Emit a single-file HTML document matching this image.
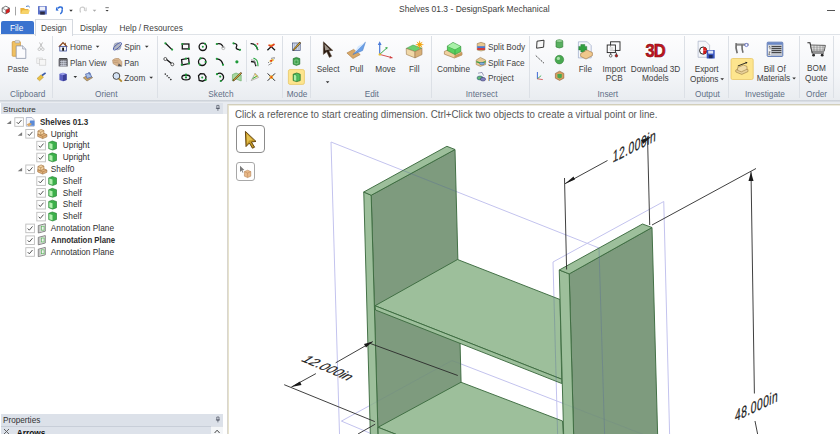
<!DOCTYPE html>
<html><head><meta charset="utf-8">
<style>
*{box-sizing:border-box}
html,body{margin:0;padding:0}
body{width:840px;height:434px;overflow:hidden;position:relative;background:#fff;font-family:"Liberation Sans",sans-serif;color:#3c3c3c}
.a{position:absolute}
.t{position:absolute;white-space:nowrap;font-size:8.25px;line-height:1;color:#424242}
.g{position:absolute;white-space:nowrap;font-size:8.25px;line-height:1;color:#5f6e86}
.sep{position:absolute;width:1px;background:#dce0e6;top:36px;height:62px}
#ribbon{position:absolute;left:0;top:34px;width:840px;height:67px;background:linear-gradient(#fdfdfe 0%,#f3f5f8 60%,#e9ecf0 100%);border-top:1px solid #dfe3e8}
.tr{position:absolute;white-space:nowrap;font-size:8.3px;line-height:1;color:#2e2e2e}
svg{position:absolute;overflow:visible}
</style></head><body>

<!-- title bar -->
<div class="a" style="left:0;top:0;width:840px;height:20px;background:#fff"></div>
<div class="t" style="left:399px;top:3.9px;font-size:9.6px;color:#404040;transform:scaleX(0.885);transform-origin:0 0">Shelves 01.3 - DesignSpark Mechanical</div>
<div class="a" style="left:827px;top:10px;width:8px;height:1px;background:#555"></div>

<!-- tabs -->
<div class="a" style="left:1px;top:21px;width:33px;height:14px;background:#3a73cf;border-radius:2px 2px 0 0"></div>
<div class="t" style="left:10px;top:24.5px;color:#fff">File</div>
<div class="a" style="left:35px;top:19px;width:38px;height:17px;background:#fdfdfe;border:1px solid #d5d9df;border-bottom:none;z-index:2"></div>
<div class="t" style="left:41px;top:24.5px;z-index:3">Design</div>
<div class="t" style="left:80px;top:24.5px">Display</div>
<div class="t" style="left:119.5px;top:24.5px">Help / Resources</div>

<!-- ribbon -->
<div id="ribbon"></div>
<div class="a" style="left:0;top:100px;width:840px;height:5px;background:#e9ecf1"></div><div class="a" style="left:0;top:100px;width:840px;height:2px;background:linear-gradient(#c9ced6,#dfe3e9)"></div>

<!-- group labels -->
<div class="g" style="left:10px;top:90.9px">Clipboard</div>
<div class="g" style="left:95px;top:90.9px">Orient</div>
<div class="g" style="left:208.3px;top:90.9px">Sketch</div>
<div class="g" style="left:286.7px;top:90.9px">Mode</div>
<div class="g" style="left:364.7px;top:90.9px">Edit</div>
<div class="g" style="left:465.8px;top:90.9px">Intersect</div>
<div class="g" style="left:597.5px;top:90.9px">Insert</div>
<div class="g" style="left:695px;top:90.9px">Output</div>
<div class="g" style="left:745px;top:90.9px">Investigate</div>
<div class="g" style="left:806px;top:90.9px">Order</div>

<div class="sep" style="left:52px"></div>
<div class="sep" style="left:157px"></div>
<div class="sep" style="left:246px;top:40px;height:42px"></div>
<div class="sep" style="left:282px"></div>
<div class="sep" style="left:310px"></div>
<div class="sep" style="left:431px"></div>
<div class="sep" style="left:529px"></div>
<div class="sep" style="left:684px"></div>
<div class="sep" style="left:728px"></div>
<div class="sep" style="left:799px"></div>
<div class="sep" style="left:833px"></div>

<!-- ribbon texts -->
<div class="t" style="left:7.5px;top:65.6px">Paste</div>
<div class="t" style="left:70px;top:44.2px">Home</div>
<div class="t" style="left:70px;top:59.6px">Plan View</div>
<div class="t" style="left:124.2px;top:44.2px">Spin</div>
<div class="t" style="left:124.2px;top:59.6px">Pan</div>
<div class="t" style="left:124.2px;top:75.1px">Zoom</div>
<div class="t" style="left:316.7px;top:65.6px">Select</div>
<div class="t" style="left:349.7px;top:65.6px">Pull</div>
<div class="t" style="left:375.3px;top:65.6px">Move</div>
<div class="t" style="left:409px;top:65.6px">Fill</div>
<div class="t" style="left:437px;top:65.6px">Combine</div>
<div class="t" style="left:488px;top:44.2px">Split Body</div>
<div class="t" style="left:488px;top:59.6px">Split Face</div>
<div class="t" style="left:488px;top:75.1px">Project</div>
<div class="t" style="left:578.7px;top:65.9px">File</div>
<div class="t" style="left:602.5px;top:65.9px">Import</div>
<div class="t" style="left:605.8px;top:74.9px">PCB</div>
<div class="t" style="left:630.8px;top:65.9px">Download 3D</div>
<div class="t" style="left:642px;top:74.9px">Models</div>
<div class="t" style="left:694.7px;top:66.3px">Export</div>
<div class="t" style="left:690px;top:76.2px">Options</div>
<div class="t" style="left:763.7px;top:66.3px">Bill Of</div>
<div class="t" style="left:756.7px;top:75.3px">Materials</div>
<div class="t" style="left:807px;top:65.3px">BOM</div>
<div class="t" style="left:805px;top:74.6px">Quote</div>

<!-- left panel -->
<div class="a" style="left:0;top:103px;width:227px;height:331px;background:#fff"></div>
<div class="a" style="left:223px;top:102px;width:4px;height:12px;background:#e9ecf1"></div>
<div class="a" style="left:1px;top:102.5px;width:222px;height:11.5px;background:#dce1e9"></div>
<div class="tr" style="left:3px;top:105.5px;color:#333;font-size:8.1px">Structure</div>
<div class="a" style="left:227px;top:104px;width:1px;height:330px;background:#d9d6cf"></div>
<div class="a" style="left:228px;top:104px;width:1px;height:330px;background:#e6e2cc"></div>

<!-- properties -->
<div class="a" style="left:1px;top:414px;width:222px;height:12px;background:#dce1e9"></div>
<div class="a" style="left:1px;top:426px;width:222px;height:1px;background:#c8ced8"></div>
<div class="a" style="left:1px;top:427px;width:222px;height:7px;background:#dde2ea"></div>
<div class="tr" style="left:3px;top:416.8px;color:#333;font-size:8.2px">Properties</div>

<!-- viewport -->
<div class="a" style="left:228px;top:104px;width:612px;height:1px;background:#d2cebb"></div><div class="a" style="left:229px;top:105px;width:611px;height:1px;background:#eeecdf"></div>
<div class="a" style="left:235px;top:110px;font-size:10.3px;line-height:1;white-space:nowrap;color:#585858;transform:scaleX(0.947);transform-origin:0 0">Click a reference to start creating dimension. Ctrl+Click two objects to create a virtual point or line.</div>


<svg class="a" style="left:0;top:0" width="840" height="102" viewBox="0 0 840 102">
<!-- QAT -->
<g>
<path d="M5.8,6.2 L9.4,8 L9.4,12 L5.8,13.8 L2.2,12 L2.2,8 Z" fill="#fff" stroke="#6a6a6a" stroke-width="0.9"/>
<path d="M5.8,10 L9.4,8 L9.4,12 L5.8,13.8 Z" fill="#d81b1b"/>
<path d="M2.2,8 L5.8,10 L9.4,8 M5.8,10 L5.8,13.8" stroke="#6a6a6a" stroke-width="0.7" fill="none"/>
<rect x="15" y="6.8" width="0.9" height="8.6" fill="#9a9a9a"/>
<path d="M20.4,8 L24,8 L25,9 L28.5,9 L28.5,13.8 L20.4,13.8 Z" fill="#e9b23c"/>
<path d="M20.8,13.8 L22.5,10.3 L30,10.3 L28.3,13.8 Z" fill="#f7d46a"/>
<path d="M26,6.5 Q28.5,5 29.8,7.2" stroke="#3a6fc0" stroke-width="0.9" fill="none"/>
<rect x="38" y="6" width="8.8" height="8.6" fill="#5a70c8" rx="0.6"/>
<rect x="39.6" y="6.6" width="5.6" height="3.8" fill="#eef0f8"/>
<rect x="40.2" y="11.6" width="4.6" height="3" fill="#2c2c44"/>
<path d="M62.2,9.5 Q62.8,6.5 59.8,7 L57.5,8.2" stroke="#2e6dd8" stroke-width="1.6" fill="none"/>
<path d="M56.2,6.8 L58.6,10.8 L55.8,10.6 Z" fill="#2e6dd8"/>
<path d="M62.2,9.5 Q62.5,12.5 60.2,13.8" stroke="#2e6dd8" stroke-width="1.4" fill="none"/>
<path d="M69.2,9.7 L72.8,9.7 L71.0,11.7 Z" fill="#333"/>
<path d="M80.5,12.5 Q79,7 82.5,7 Q85,7.2 84.6,9.8" stroke="#c8c8c8" stroke-width="1.2" fill="none"/>
<path d="M86.2,7.5 L86.2,11 L83.8,10.2" stroke="#c8c8c8" stroke-width="0.9" fill="none"/>
<path d="M92.7,9.8 L96.3,9.8 L94.5,11.8 Z" fill="#aaa"/>
<rect x="105.4" y="7.4" width="3.4" height="0.7" fill="#444"/>
<path d="M105.5,9.9 L108.7,9.9 L107.1,11.5 Z" fill="#333"/>
</g>

<!-- Clipboard -->
<g>
<rect x="12.2" y="41.5" width="8.2" height="14.8" rx="0.8" fill="#f0c060" stroke="#c89038" stroke-width="0.7"/>
<rect x="15" y="40.4" width="4.6" height="2.6" rx="0.8" fill="#d8d8d8" stroke="#999" stroke-width="0.5"/>
<path d="M16.2,45.9 L22.6,45.9 L25.8,49 L25.8,58.4 L16.2,58.4 Z" fill="#fbfbfd" stroke="#8a94aa" stroke-width="0.8"/>
<path d="M22.6,45.9 L22.6,49 L25.8,49" fill="#e4e6ee" stroke="#8a94aa" stroke-width="0.6"/>
<!-- cut -->
<path d="M39.5,42.5 L42.5,47.8 M42.5,42.5 L39.5,47.8" stroke="#b9b9b9" stroke-width="0.9"/>
<circle cx="39.3" cy="49.2" r="1.3" fill="none" stroke="#b9b9b9" stroke-width="0.8"/>
<circle cx="42.8" cy="49.2" r="1.3" fill="none" stroke="#b9b9b9" stroke-width="0.8"/>
<!-- copy -->
<rect x="36.8" y="58" width="5.5" height="5.5" fill="#f3f3f3" stroke="#cfcfcf" stroke-width="0.6"/>
<rect x="39.6" y="59.6" width="6.2" height="5.6" fill="#f6f6f6" stroke="#c9c9c9" stroke-width="0.6"/>
<!-- format painter -->
<path d="M37,78.5 L41,74.8 L43.5,77.2 L39.6,80.8 Z" fill="#e8c044" stroke="#b08a2a" stroke-width="0.5"/>
<path d="M42,75.5 L45.6,72.8" stroke="#3a5aa8" stroke-width="1.6"/>
</g>
<!-- Orient -->
<g>
<path d="M58.9,47 L63,42.6 L67.2,47" fill="none" stroke="#8a4a20" stroke-width="1.3"/>
<path d="M65.3,42.8 L65.3,45" stroke="#8a4a20" stroke-width="1"/>
<rect x="59.8" y="46.5" width="6.6" height="4.5" fill="#f4f4f8" stroke="#3c4e98" stroke-width="0.8"/>
<rect x="62.2" y="47.6" width="1.8" height="3.2" fill="#111"/>
<path d="M95.8,45.8 L99.4,45.8 L97.6,47.8 Z" fill="#333"/>
<!-- plan view -->
<rect x="58.6" y="59.2" width="9.2" height="7.4" rx="0.5" fill="#6a6a72"/>
<path d="M59.3,57.9 L67,57.9 L67.8,59.5 L58.6,59.5 Z" fill="#444"/>
<path d="M60,61.6 H66.6 M60,63.6 H66.6 M60,65.4 H66.6 M61.8,60.2 V66.2 M63.4,60.2 V66.2 M65,60.2 V66.2" stroke="#dfe4f2" stroke-width="0.6"/>
<!-- cube -->
<path d="M59.4,74 L63,72.8 L66.6,74 L66.6,80 L63,81.2 L59.4,80 Z" fill="#5b5fc0"/>
<path d="M59.4,74 L63,72.8 L66.6,74 L63,75.2 Z" fill="#9a9ee8"/>
<path d="M63,75.2 L66.6,74 L66.6,80 L63,81.2 Z" fill="#3b3f98"/>
<path d="M73.5,76.1 L77.1,76.1 L75.3,78.1 Z" fill="#333"/>
<!-- sketch plane -->
<path d="M83.3,77.8 L89,74.5 L92.6,77.6 L87,81 Z" fill="#c8a060" stroke="#7a6a50" stroke-width="0.6"/>
<path d="M85.5,74 L90,73 L91.6,77 L87,78.4 Z" fill="#a8c0e8" stroke="#4a62a8" stroke-width="0.7"/>
<path d="M88,72.6 L89.8,72.6 L89.8,75" stroke="#4a62a8" stroke-width="0.6" fill="none"/>
<!-- spin -->
<circle cx="117.4" cy="46.3" r="3.6" fill="#b4b8c4" stroke="#8890a4" stroke-width="0.5"/>
<ellipse cx="117.4" cy="46.3" rx="5.2" ry="1.8" transform="rotate(-40 117.4 46.3)" fill="none" stroke="#4a5aa8" stroke-width="0.9"/>
<path d="M144.9,45.8 L148.6,45.8 L146.8,47.8 Z" fill="#333"/>
<!-- pan -->
<path d="M112.6,60 Q115,57.6 119,58.6 L121.8,61.5 L121.8,65.8 L117,66 L113,63.6 Z" fill="#d8b48e" stroke="#a88460" stroke-width="0.5"/>
<path d="M113.5,60.5 L118.5,61 M113.2,62.2 L118.5,62.8" stroke="#b08a64" stroke-width="0.5"/>
<path d="M118.8,63.2 L122.2,66.4 L117.8,66.2 Z" fill="#5a5a5a"/>
<!-- zoom -->
<circle cx="116.4" cy="76" r="3.4" fill="#d4e2f4" stroke="#4a4a4a" stroke-width="1"/>
<path d="M118.8,78.6 L121.8,81.6" stroke="#b08a2a" stroke-width="1.8"/>
<path d="M149.3,76.8 L153.0,76.8 L151.2,78.8 Z" fill="#333"/>
</g>
<!-- Sketch -->
<g stroke="#141414" stroke-width="1.3" fill="none">
<path d="M165.5,43.3 L172,49.6"/>
<rect x="182.3" y="44" width="6.6" height="4.9"/>
<circle cx="202.8" cy="46.8" r="3.7"/>
<path d="M166.5,59.5 L171.5,63.6"/>
<path d="M181.6,59.6 L188.6,58.2 L189.2,63.6 L182.2,65 Z"/>
<circle cx="202.2" cy="61.8" r="3.7"/>
<path d="M164.8,73.6 L172,80.6" stroke-dasharray="1.3 1.3"/>
<ellipse cx="186" cy="77.4" rx="4.1" ry="2.4"/>
<path d="M198.5,75.8 L200.5,73.6 L204,73.8 L206,76.6 L205.6,79.8 L202.6,81.2 L199.2,80.4 Z"/>
<path d="M216.8,44 Q221.5,42.5 223.3,47.5"/>
<path d="M233.5,43.3 Q238,43.8 236.5,46.5 Q235,49.5 240,49.8"/>
<path d="M216.8,58.8 Q221.8,59 223,64.8"/>
<path d="M217,74 Q221.5,71.6 223.4,76 Q224.2,79.8 220.6,81"/>
<path d="M250.6,43.6 Q256,43.2 257.8,50.2"/>
<path d="M251,61.5 L254.6,62 L256,66.2"/>
<path d="M267.4,50.3 L271.2,46.6 L275,50.3"/>
<path d="M267.6,80.8 L275,73.4 M267.6,73.4 L275,80.8" stroke-width="0.9"/>
</g>
<g stroke="#333" stroke-width="0.8" fill="#fff">
<circle cx="165.3" cy="59" r="1.5"/>
<circle cx="172.3" cy="64.3" r="1.5"/>
</g>
<g fill="#1f9a3a">
<circle cx="165.4" cy="43.3" r="1.1"/><circle cx="172.1" cy="49.6" r="1.1"/>
<circle cx="182.3" cy="44" r="1.1"/><circle cx="189" cy="49" r="1.1"/>
<circle cx="202.8" cy="46.8" r="1"/><circle cx="205" cy="43.8" r="1"/>
<circle cx="181.8" cy="64.8" r="1.1"/><circle cx="186" cy="58.6" r="1.1"/><circle cx="189" cy="63.4" r="1.1"/>
<circle cx="199.8" cy="64.6" r="1.1"/><circle cx="200.5" cy="58.4" r="1.1"/><circle cx="205.6" cy="62" r="1.1"/>
<circle cx="186" cy="77.4" r="1.1"/><circle cx="186" cy="74.6" r="1.1"/>
<circle cx="202.2" cy="77.4" r="1"/><circle cx="205.6" cy="79.8" r="1.1"/>
<circle cx="216.8" cy="44" r="1.1"/>
<circle cx="233.5" cy="43.3" r="1.1"/><circle cx="240" cy="49.8" r="1.1"/>
<circle cx="216.8" cy="58.8" r="1.1"/><circle cx="223" cy="64.8" r="1.1"/>
<circle cx="236.9" cy="61.8" r="1.6"/>
<circle cx="217" cy="74.2" r="1.1"/><circle cx="220.2" cy="76.6" r="1.1"/><circle cx="220.8" cy="81" r="1.1"/>
</g>
<circle cx="223.3" cy="48" r="1.6" fill="none" stroke="#a0a0a0" stroke-width="0.7"/>
<g>
<path d="M232.4,74.6 L236,73 L241.2,75 L241.2,81 L236,79 L232.4,80.8 Z" fill="#a8d8a0" stroke="#60a860" stroke-width="0.6"/>
<path d="M233,80.8 L241.5,72.6" stroke="#5a3a10" stroke-width="1.7"/>
<path d="M233.6,80.2 L240.9,73.2" stroke="#e8b840" stroke-width="0.9"/>
<path d="M254.2,44.8 Q257,46 257.8,50" stroke="#22a040" stroke-width="1.1" fill="none"/>
<circle cx="257.5" cy="43.8" r="0.9" fill="#e04040"/>
<path d="M253.4,58.4 Q258,58.4 258,66.2" stroke="#28a840" stroke-width="1.1" fill="none"/>
<path d="M251,59.8 L254.6,60.4 L255.6,64.6" stroke="#8a8a8a" stroke-width="0.8" fill="none"/>
<path d="M251.2,80.6 L255.2,73.2 L258.6,77.4 Z" fill="#f4f0c8" stroke="#909090" stroke-width="0.6"/>
<path d="M252.6,78.6 L257.4,75.8" stroke="#28a840" stroke-width="1"/>
<path d="M254.6,73.6 L257.6,77" stroke="#e8b840" stroke-width="0.9"/>
<path d="M268.5,44.8 L271.2,46.6 L274.5,44 " fill="#f0c030" stroke="#e04020" stroke-width="1.6"/>
<path d="M268,62.8 L275.2,58.2" stroke="#555" stroke-width="0.7" stroke-dasharray="1.2 1"/>
<path d="M269.8,61.6 L273.4,59.6" stroke="#f0c030" stroke-width="2.2"/>
<circle cx="271.2" cy="60.8" r="1" fill="#e03020"/>
<path d="M268.4,65.2 L272,63 M271,58.4 L274.8,57.6" stroke="#666" stroke-width="0.7"/>
<circle cx="271.3" cy="77.1" r="1.9" fill="#f0b830"/>
<circle cx="271.3" cy="77.1" r="0.9" fill="#e03020"/>
</g>
<!-- Mode -->
<g>
<rect x="292.6" y="43" width="7.6" height="7.4" fill="#dfe6f2" stroke="#40507c" stroke-width="0.7"/>
<path d="M294.5,43.2 V50.2 M296.5,43.2 V50.2 M298.5,43.2 V50.2 M292.8,45 H300 M292.8,47 H300 M292.8,49 H300" stroke="#8a9ac0" stroke-width="0.4"/>
<path d="M293.2,50.4 L300.4,42.4" stroke="#4a3410" stroke-width="1.6"/>
<path d="M293.6,50 L300,42.8" stroke="#f0c040" stroke-width="0.9"/>
<path d="M293.2,58.6 L296.4,57.4 L299.8,58.6 L299.8,64.2 L296.4,65.4 L293.2,64.2 Z" fill="#3aa048" stroke="#1d6a28" stroke-width="0.6"/>
<path d="M294.8,60 L298,60 L298,63.8 L294.8,63.8 Z" fill="none" stroke="#bfe8c0" stroke-width="0.5"/>
<rect x="288.4" y="69.6" width="16" height="14.8" rx="1.6" fill="#fde58e" stroke="#e9c766" stroke-width="0.8"/>
<path d="M293.2,74.2 L296.7,73 L300.2,74.2 L300.2,80.6 L296.7,81.6 L293.2,80.6 Z" fill="#52c060" stroke="#1d6a28" stroke-width="0.7"/>
<path d="M293.6,74.4 L296.7,75.4 L296.7,81.4" stroke="#1d6a28" stroke-width="0.5" fill="none"/>
<path d="M294,74.8 L296.4,75.6 L296.4,80.8 L294,80.2 Z" fill="#a8f0a8"/>
</g>
<!-- Edit -->
<g>
<path d="M323.4,41.8 L332.8,50.4 L328.8,50.8 L331.6,56.2 L329.4,57.4 L326.8,51.8 L323.4,54.4 Z" fill="#2a1a10" stroke="#5a4a3a" stroke-width="0.6"/>
<path d="M324.4,44 L330,49.4 L325.2,50.6 Z" fill="#a0968c"/>
<path d="M325.8,81.2 L329.4,81.2 L327.6,83.2 Z" fill="#333"/>
<path d="M346.9,53 L353.6,49.4 L360.2,54.6 L353,58.5 Z" fill="#d8a868" stroke="#a87840" stroke-width="0.6"/>
<path d="M352.8,54.6 L365.4,42.2 L362.6,50.6 Z" fill="#6aa0e8" stroke="#3a70c0" stroke-width="0.5"/>
<path d="M354.5,52.8 L365.4,42.2 L358,46.2 Z" fill="#d8eaff"/>
<path d="M379.7,54.4 L379.7,43.5" stroke="#4a7ad8" stroke-width="1.2"/>
<path d="M377.8,45 L379.7,41.2 L381.6,45 Z" fill="#4a7ad8"/>
<path d="M379.7,54.4 L386.6,48.2" stroke="#38a848" stroke-width="1"/>
<path d="M385,47.4 L387.6,47 L387,49.6 Z" fill="#38a848"/>
<path d="M379.7,54.4 L392.4,57.8" stroke="#d04040" stroke-width="0.9"/>
<path d="M390,56 L392.8,57.9 L389.6,58.6 Z" fill="#d04040"/>
<circle cx="379.8" cy="54.4" r="1.2" fill="#e8c030"/>
<path d="M406.2,48.4 L413,45 L422,48.2 L415,51.6 Z" fill="#6ad070" stroke="#3a8a40" stroke-width="0.5"/>
<path d="M406.2,48.4 L415,51.6 L415,57.9 L406.4,54.4 Z" fill="#f0d8a8" stroke="#9a7a50" stroke-width="0.6"/>
<path d="M415,51.6 L422,48.2 L422,54.6 L415,57.9 Z" fill="#d8b078" stroke="#9a7a50" stroke-width="0.6"/>
<circle cx="419.6" cy="44.6" r="2.2" fill="#f8c020"/>
<path d="M419.6,40.8 V48.4 M415.8,44.6 H423.4 M416.9,41.9 L422.3,47.3 M422.3,41.9 L416.9,47.3" stroke="#f09a10" stroke-width="0.8"/>
</g>
<!-- Intersect -->
<g>
<path d="M444.4,51.4 L451,48.6 L462,52.4 L462,55 L454.4,58 L444.4,54.2 Z" fill="#f0d0a0" stroke="#9a7040" stroke-width="0.6"/>
<path d="M454.4,55.4 L462,52.4 L462,55 L454.4,58 Z" fill="#c8985c"/>
<path d="M447.4,46 L453,42.4 L460.8,46.4 L460.8,51.6 L455,54.6 L447.4,50.6 Z" fill="#58d060" stroke="#2a8a30" stroke-width="0.6"/>
<path d="M447.4,46 L455,49.6 L460.8,46.4 M455,49.6 V54.6" stroke="#2a8a30" stroke-width="0.5" fill="none"/>
<path d="M447.6,46.2 L453,42.8 L460.4,46.4 L455,49.4 Z" fill="#a8f0a8"/>
<path d="M477.2,43.6 L481,42.3 L485,43.6 L485,50 L481,51 L477.2,50 Z" fill="#e8c890" stroke="#8a6a40" stroke-width="0.5"/>
<rect x="477.2" y="46.2" width="7.8" height="1.8" fill="#4a7ad0"/>
<rect x="477.2" y="48" width="7.8" height="2" fill="#d04040"/>
<path d="M476.2,60 L480.4,57.4 L485.6,60 L485.6,64.6 L480.4,66.4 L476.2,64.6 Z" fill="#e8c890" stroke="#8a6a40" stroke-width="0.5"/>
<path d="M476.4,61.6 L481,63.2 L485.6,61.6" stroke="#30a040" stroke-width="1.2" fill="none"/>
<ellipse cx="482" cy="63.6" rx="2.6" ry="1.2" fill="#80b0e0" stroke="#3a60a0" stroke-width="0.5"/>
<path d="M478,73.2 L482,72.4 L483.6,75.6" stroke="#606090" stroke-width="0.6" fill="none"/>
<ellipse cx="480" cy="78" rx="3" ry="2" fill="#60b870" stroke="#3a5a90" stroke-width="0.6"/>
<ellipse cx="483" cy="79.2" rx="2.6" ry="1.8" fill="#8080c0" stroke="#3a3a70" stroke-width="0.6"/>
</g>
<!-- Insert small -->
<g>
<path d="M537,41.2 L544,40.2 L543.6,47.2 L536.6,48.2 Z" fill="#f8f8f8" stroke="#222" stroke-width="0.9"/>
<path d="M535.8,55.6 L544.4,63.6" stroke="#222" stroke-width="0.9" stroke-dasharray="1.4 1"/>
<path d="M537.4,72 L537.4,78.8" stroke="#2a5ad0" stroke-width="0.9"/>
<path d="M537.4,78.8 L541.2,75.6" stroke="#20a040" stroke-width="0.8"/>
<path d="M537.4,78.8 L542.8,79.6" stroke="#d04040" stroke-width="0.8"/>
<path d="M556,41 Q559.4,39 562.8,41 L562.8,47 Q559.4,49 556,47 Z" fill="#58b060" stroke="#2a7a30" stroke-width="0.6"/>
<ellipse cx="559.4" cy="41" rx="3.4" ry="1.2" fill="#a8e0a8" stroke="#2a7a30" stroke-width="0.5"/>
<circle cx="559.4" cy="59.6" r="4.3" fill="#48a850" stroke="#2a7a30" stroke-width="0.5"/>
<circle cx="558.4" cy="58.4" r="1.6" fill="#a8e0a8"/>
<path d="M559.6,71.2 L563.8,73.4 L563.8,78.2 L559.6,80.4 L555.4,78.2 L555.4,73.4 Z" fill="#d8a060" stroke="#8a5a30" stroke-width="0.6"/>
<path d="M557.4,74 L561.8,74 L561.8,77.6 L559.6,78.6 L557.4,77.6 Z" fill="#48a850"/>
<!-- File -->
<path d="M578.4,41.8 L587.4,41.8 L591.2,45.6 L591.2,57.9 L578.4,57.9 Z" fill="#f4f6fa" stroke="#8a9ac0" stroke-width="0.6"/>
<path d="M580.8,44.5 H584.8 V46.4 H586.8 V50 H584.8 V52 H580.8 V50 H578.8 V46.4 H580.8 Z" fill="#30a040" stroke="#1a6a2a" stroke-width="0.4"/>
<path d="M580.6,53.6 L587,50 L592.4,52.6 L592.4,55.6 L586,59 L580.6,56.4 Z" fill="#f0c88c" stroke="#9a7040" stroke-width="0.6"/>
<!-- import pcb -->
<rect x="610.6" y="41.8" width="9.4" height="8.6" fill="none" stroke="#222" stroke-width="0.9"/>
<rect x="607.2" y="45" width="8.2" height="7.6" fill="rgba(255,255,255,0.6)" stroke="#222" stroke-width="0.9"/>
<rect x="609.4" y="47" width="4" height="3.6" fill="#e0e0e0"/>
<path d="M610.7,52.6 V55 M616.4,52.6 V55" stroke="#222" stroke-width="0.8"/>
<circle cx="610.7" cy="55.8" r="1.3" fill="#fff" stroke="#333" stroke-width="0.7"/>
<circle cx="616.4" cy="55.8" r="1.3" fill="#d01010" stroke="#333" stroke-width="0.6"/>
<!-- 3D -->
<rect x="645.8" y="42.9" width="18.4" height="15" fill="#fff"/>
<text x="0" y="0" transform="translate(645.4,57) scale(0.92,1)" font-family="Liberation Sans" font-weight="bold" font-size="18" fill="#c8141e" stroke="#7a0a10" stroke-width="0.6" letter-spacing="-1">3D</text>
</g>
<!-- Output -->
<g>
<path d="M698.1,41.2 L705.6,41.2 L709.6,45.2 L709.6,57.3 L698.1,57.3 Z" fill="#f4f6fa" stroke="#9aa4bc" stroke-width="0.6"/>
<circle cx="703.2" cy="50.6" r="3.6" fill="#fff" stroke="#222" stroke-width="1"/>
<path d="M703.2,47 A3.6,3.6 0 0 1 706.8,50.6 L703.2,50.6 Z" fill="#e02020"/>
<path d="M706.8,50.6 A3.6,3.6 0 0 1 703.2,54.2 L703.2,50.6 Z" fill="#d01818"/>
<rect x="706.7" y="50" width="8" height="8.4" fill="#3a56c0" rx="0.5"/>
<rect x="708.2" y="50.6" width="5" height="3" fill="#dfe6f8"/>
<rect x="708.8" y="55" width="3.8" height="3.2" fill="#1c2a60"/>
<path d="M720.4,78.3 L724.0,78.3 L722.2,80.3 Z" fill="#333"/>
</g>
<!-- Investigate -->
<g>
<path d="M736.6,44.6 L748.6,44.6" stroke="#8a8a8a" stroke-width="2.2"/>
<path d="M736.2,43.2 Q735.4,48.4 737.2,53.2" stroke="#6e6e6e" stroke-width="1.7" fill="none"/>
<path d="M742,44.6 Q741.8,49.4 743,52.8" stroke="#6e6e6e" stroke-width="1.6" fill="none"/>
<circle cx="746.4" cy="45" r="1.6" fill="#f4f6ff" stroke="#4a5ac0" stroke-width="0.7"/>
<rect x="731" y="58.5" width="22.2" height="21" rx="1.6" fill="#fde58e" stroke="#e9c766" stroke-width="0.8"/>
<path d="M735.8,70 L742,67.2 L748,69.6 L748,71.6 L741.8,74.4 L735.8,72 Z" fill="#e8d098" stroke="#8a6a30" stroke-width="0.5" stroke-linejoin="miter"/>
<path d="M737.6,67.6 L743.4,65 L747,66.4 L747,69.2 L741.4,71.8 L737.6,70.4 Z" fill="#f0dca8" stroke="#8a6a30" stroke-width="0.5" stroke-linejoin="miter"/>
<path d="M737.8,66 L746.6,62.6" stroke="#1a1a1a" stroke-width="0.9"/>
<path d="M745.4,61.8 L747.6,62.4 L746,63.8 Z" fill="#1a1a1a"/>
<rect x="767.2" y="42.2" width="15.6" height="14.2" rx="0.8" fill="#c4c8d0" stroke="#5a78b8" stroke-width="1"/>
<rect x="767.7" y="42.7" width="14.6" height="2" fill="#6a88c8"/>
<path d="M771.6,46.6 H781.4 M771.6,48.6 H781.4 M771.6,50.6 H781.4 M771.6,52.6 H781.4" stroke="#3a3a3a" stroke-width="1"/><rect x="768" y="45.6" width="3" height="9.8" fill="#f4f4f4"/>
<path d="M768.6,47 L770,46.4 L770,49.4 M768.6,52 L770.2,51.8 L768.6,54.4 L770.4,54.4" stroke="#333" stroke-width="0.6" fill="none"/>
<path d="M792.3,77.6 L795.9,77.6 L794.1,79.6 Z" fill="#333"/>
</g>
<!-- Order -->
<g>
<path d="M807.4,42.8 L810,42.8 L812.2,53 L824,53" fill="none" stroke="#2a2a2a" stroke-width="1.1"/>
<path d="M810.6,45 L825.4,45.4 L824.2,51.2 L811.8,51.2 Z" fill="#f0f0f0" stroke="#3a3a3a" stroke-width="0.8"/>
<path d="M814,45.2 V51 M817,45.2 V51 M820,45.2 V51 M823,45.2 V51 M811,47.2 H825 M811.4,49.2 H824.6" stroke="#6a6a6a" stroke-width="0.5"/>
<circle cx="813.6" cy="55.2" r="1.4" fill="#2a2a2a"/>
<circle cx="822.2" cy="55.2" r="1.4" fill="#2a2a2a"/>
</g>
</svg>

<svg class="a" style="left:0;top:102px" width="227" height="170" viewBox="0 102 227 170">
<path d="M11.1,120.4 L11.1,124.0 L6.7,124.0 Z" fill="#7a7a7a"/>
<rect x="14.8" y="117.7" width="8.6" height="8.6" fill="#fff" stroke="#bdbdbd" stroke-width="0.9"/>
<path d="M16.7,122.1 L18.3,123.8 L21.5,120.0" fill="none" stroke="#4a4a4a" stroke-width="0.95"/>
<path d="M26.3,117.5 L31.8,117.5 L34.1,119.8 L34.1,126.2 L26.3,126.2 Z" fill="#f4f6fb" stroke="#8a94b0" stroke-width="0.6"/>
<rect x="29.900000000000002" y="120.4" width="4.6" height="5.4" fill="#5a8ad8" rx="0.6"/>
<path d="M26.5,124.4 L29.7,122.8 L31.9,124.0 L28.900000000000002,126.4 Z" fill="#d8a868"/>
<path d="M22.1,132.2 L22.1,135.8 L17.7,135.8 Z" fill="#7a7a7a"/>
<rect x="25.8" y="129.5" width="8.6" height="8.6" fill="#fff" stroke="#bdbdbd" stroke-width="0.9"/>
<path d="M27.7,133.9 L29.3,135.6 L32.5,131.8" fill="none" stroke="#4a4a4a" stroke-width="0.95"/>
<path d="M37.7,134.2 L41.9,132.4 L46.9,134.6 L46.9,136.8 L42.7,138.6 L37.7,136.4 Z" fill="#e4b47c" stroke="#9a6a38" stroke-width="0.6" stroke-linejoin="miter"/>
<path d="M37.7,134.2 L42.7,136.4 L46.9,134.6 M42.7,136.4 V138.6" fill="none" stroke="#9a6a38" stroke-width="0.5"/>
<path d="M37.9,131.0 L41.1,129.4 L43.9,130.6 L43.9,133.6 L40.7,135.2 L37.9,134.0 Z" fill="#f4d4a4" stroke="#9a6a38" stroke-width="0.6" stroke-linejoin="miter"/>
<path d="M37.9,131.0 L40.7,132.2 L43.9,130.6 M40.7,132.2 V135.2" fill="none" stroke="#9a6a38" stroke-width="0.5"/>
<rect x="36.8" y="141.3" width="8.6" height="8.6" fill="#fff" stroke="#bdbdbd" stroke-width="0.9"/>
<path d="M38.7,145.7 L40.3,147.4 L43.5,143.6" fill="none" stroke="#4a4a4a" stroke-width="0.95"/>
<path d="M48.699999999999996,142.44 L52.3,141.04 L56.49999999999999,142.44 L56.49999999999999,148.64000000000001 L52.699999999999996,150.04 L48.699999999999996,148.64000000000001 Z" fill="#3cb04a" stroke="#1e7a2a" stroke-width="0.6"/>
<path d="M49.3,143.04 L52.49999999999999,144.04 L52.49999999999999,149.24 L49.3,148.24 Z" fill="#b4f0b0"/>
<rect x="36.8" y="153.2" width="8.6" height="8.6" fill="#fff" stroke="#bdbdbd" stroke-width="0.9"/>
<path d="M38.7,157.6 L40.3,159.3 L43.5,155.5" fill="none" stroke="#4a4a4a" stroke-width="0.95"/>
<path d="M48.699999999999996,154.26 L52.3,152.85999999999999 L56.49999999999999,154.26 L56.49999999999999,160.46 L52.699999999999996,161.85999999999999 L48.699999999999996,160.46 Z" fill="#3cb04a" stroke="#1e7a2a" stroke-width="0.6"/>
<path d="M49.3,154.85999999999999 L52.49999999999999,155.85999999999999 L52.49999999999999,161.06 L49.3,160.06 Z" fill="#b4f0b0"/>
<path d="M22.1,167.7 L22.1,171.3 L17.7,171.3 Z" fill="#7a7a7a"/>
<rect x="25.8" y="165.0" width="8.6" height="8.6" fill="#fff" stroke="#bdbdbd" stroke-width="0.9"/>
<path d="M27.7,169.4 L29.3,171.1 L32.5,167.3" fill="none" stroke="#4a4a4a" stroke-width="0.95"/>
<path d="M37.7,169.7 L41.9,167.9 L46.9,170.1 L46.9,172.3 L42.7,174.1 L37.7,171.9 Z" fill="#e4b47c" stroke="#9a6a38" stroke-width="0.6" stroke-linejoin="miter"/>
<path d="M37.7,169.7 L42.7,171.9 L46.9,170.1 M42.7,171.9 V174.1" fill="none" stroke="#9a6a38" stroke-width="0.5"/>
<path d="M37.9,166.5 L41.1,164.9 L43.9,166.1 L43.9,169.1 L40.7,170.7 L37.9,169.5 Z" fill="#f4d4a4" stroke="#9a6a38" stroke-width="0.6" stroke-linejoin="miter"/>
<path d="M37.9,166.5 L40.7,167.7 L43.9,166.1 M40.7,167.7 V170.7" fill="none" stroke="#9a6a38" stroke-width="0.5"/>
<rect x="36.8" y="176.8" width="8.6" height="8.6" fill="#fff" stroke="#bdbdbd" stroke-width="0.9"/>
<path d="M38.7,181.2 L40.3,182.9 L43.5,179.1" fill="none" stroke="#4a4a4a" stroke-width="0.95"/>
<path d="M48.699999999999996,177.9 L52.3,176.5 L56.49999999999999,177.9 L56.49999999999999,184.10000000000002 L52.699999999999996,185.5 L48.699999999999996,184.10000000000002 Z" fill="#3cb04a" stroke="#1e7a2a" stroke-width="0.6"/>
<path d="M49.3,178.5 L52.49999999999999,179.5 L52.49999999999999,184.70000000000002 L49.3,183.70000000000002 Z" fill="#b4f0b0"/>
<rect x="36.8" y="188.6" width="8.6" height="8.6" fill="#fff" stroke="#bdbdbd" stroke-width="0.9"/>
<path d="M38.7,193.0 L40.3,194.7 L43.5,190.9" fill="none" stroke="#4a4a4a" stroke-width="0.95"/>
<path d="M48.699999999999996,189.72 L52.3,188.32 L56.49999999999999,189.72 L56.49999999999999,195.92000000000002 L52.699999999999996,197.32 L48.699999999999996,195.92000000000002 Z" fill="#3cb04a" stroke="#1e7a2a" stroke-width="0.6"/>
<path d="M49.3,190.32 L52.49999999999999,191.32 L52.49999999999999,196.52 L49.3,195.52 Z" fill="#b4f0b0"/>
<rect x="36.8" y="200.4" width="8.6" height="8.6" fill="#fff" stroke="#bdbdbd" stroke-width="0.9"/>
<path d="M38.7,204.8 L40.3,206.5 L43.5,202.7" fill="none" stroke="#4a4a4a" stroke-width="0.95"/>
<path d="M48.699999999999996,201.54 L52.3,200.14 L56.49999999999999,201.54 L56.49999999999999,207.74 L52.699999999999996,209.14 L48.699999999999996,207.74 Z" fill="#3cb04a" stroke="#1e7a2a" stroke-width="0.6"/>
<path d="M49.3,202.14 L52.49999999999999,203.14 L52.49999999999999,208.34 L49.3,207.34 Z" fill="#b4f0b0"/>
<rect x="36.8" y="212.3" width="8.6" height="8.6" fill="#fff" stroke="#bdbdbd" stroke-width="0.9"/>
<path d="M38.7,216.7 L40.3,218.4 L43.5,214.6" fill="none" stroke="#4a4a4a" stroke-width="0.95"/>
<path d="M48.699999999999996,213.35999999999999 L52.3,211.95999999999998 L56.49999999999999,213.35999999999999 L56.49999999999999,219.56 L52.699999999999996,220.95999999999998 L48.699999999999996,219.56 Z" fill="#3cb04a" stroke="#1e7a2a" stroke-width="0.6"/>
<path d="M49.3,213.95999999999998 L52.49999999999999,214.95999999999998 L52.49999999999999,220.16 L49.3,219.16 Z" fill="#b4f0b0"/>
<rect x="25.8" y="224.1" width="8.6" height="8.6" fill="#fff" stroke="#bdbdbd" stroke-width="0.9"/>
<path d="M27.7,228.5 L29.3,230.2 L32.5,226.4" fill="none" stroke="#4a4a4a" stroke-width="0.95"/>
<path d="M38.3,225.57999999999998 L45.3,223.77999999999997 L45.3,231.17999999999998 L38.3,232.98 Z" fill="#f0f0f0" stroke="#6a6a6a" stroke-width="0.8"/>
<path d="M39.9,225.77999999999997 L39.9,231.98" stroke="#9a9a9a" stroke-width="0.8"/>
<rect x="41.3" y="226.17999999999998" width="2.8" height="4" fill="none" stroke="#50b050" stroke-width="0.7"/>
<rect x="25.8" y="235.9" width="8.6" height="8.6" fill="#fff" stroke="#bdbdbd" stroke-width="0.9"/>
<path d="M27.7,240.3 L29.3,242.0 L32.5,238.2" fill="none" stroke="#4a4a4a" stroke-width="0.95"/>
<path d="M38.3,237.4 L45.3,235.6 L45.3,243.0 L38.3,244.8 Z" fill="#f0f0f0" stroke="#6a6a6a" stroke-width="0.8"/>
<path d="M39.9,237.6 L39.9,243.8" stroke="#9a9a9a" stroke-width="0.8"/>
<rect x="41.3" y="238.0" width="2.8" height="4" fill="none" stroke="#50b050" stroke-width="0.7"/>
<rect x="25.8" y="247.7" width="8.6" height="8.6" fill="#fff" stroke="#bdbdbd" stroke-width="0.9"/>
<path d="M27.7,252.1 L29.3,253.8 L32.5,250.0" fill="none" stroke="#4a4a4a" stroke-width="0.95"/>
<path d="M38.3,249.22000000000003 L45.3,247.42000000000002 L45.3,254.82000000000002 L38.3,256.62 Z" fill="#f0f0f0" stroke="#6a6a6a" stroke-width="0.8"/>
<path d="M39.9,249.42000000000002 L39.9,255.62000000000003" stroke="#9a9a9a" stroke-width="0.8"/>
<rect x="41.3" y="249.82000000000002" width="2.8" height="4" fill="none" stroke="#50b050" stroke-width="0.7"/>
</svg>
<div class="tr" style="left:39.8px;top:117.7px;font-weight:bold;transform:scaleX(0.97);transform-origin:0 0">Shelves 01.3</div>
<div class="tr" style="left:50.8px;top:129.5px;font-weight:normal">Upright</div>
<div class="tr" style="left:62.8px;top:141.3px;font-weight:normal">Upright</div>
<div class="tr" style="left:62.8px;top:153.2px;font-weight:normal">Upright</div>
<div class="tr" style="left:50.8px;top:165.0px;font-weight:normal">Shelf0</div>
<div class="tr" style="left:62.8px;top:176.8px;font-weight:normal">Shelf</div>
<div class="tr" style="left:62.8px;top:188.6px;font-weight:normal">Shelf</div>
<div class="tr" style="left:62.8px;top:200.4px;font-weight:normal">Shelf</div>
<div class="tr" style="left:62.8px;top:212.3px;font-weight:normal">Shelf</div>
<div class="tr" style="left:50.8px;top:224.1px;font-weight:normal">Annotation Plane</div>
<div class="tr" style="left:50.8px;top:235.9px;font-weight:bold;transform:scaleX(0.94);transform-origin:0 0">Annotation Plane</div>
<div class="tr" style="left:50.8px;top:247.7px;font-weight:normal">Annotation Plane</div>

<svg class="a" style="left:0;top:0" width="840" height="434" viewBox="0 0 840 434">
<defs>
<clipPath id="vp"><rect x="229" y="105" width="611" height="329"/></clipPath>
<clipPath id="faces">
<polygon points="363.75,192 446.9,146.3 455,149.5 462.4,434 370.3,434"/>
<polygon points="375,305.75 457.5,259.5 560,299.5 561.75,383.5 375.5,310"/>
<polygon points="378,427.3 461,382.25 562.5,421 563.6,434 378,434"/>
<polygon points="559.25,270 642.5,224 652,227.5 657.6,434 563.6,434"/>
</clipPath>
</defs>
<g clip-path="url(#vp)">
<g stroke="#c3c3ee" stroke-width="1" fill="none">
<path d="M331,142 L599,248 M331,142 L339.5,434 M599,248 L604.6,434"/>
<path d="M663.75,201.5 L553,262 L557.6,434 M663.75,201.5 L669.6,434"/>
<path d="M341.4,421.1 L452,360.5 M452,360.5 L650,437 M341.4,421.1 L372,434"/>
</g>
<g stroke="#3d6c40" stroke-width="0.95" stroke-linejoin="round">
<polygon points="371.2,195.25 455,149.5 462.7,444 378.3,444" fill="#7e9b7e"/>
<polygon points="363.75,192 371.2,195.25 378.3,444 370.6,444" fill="#9dbf9b"/>
<polygon points="363.75,192 446.9,146.3 455,149.5 371.2,195.25" fill="#9dbf9b"/>
<polygon points="375,305.75 457.5,259.5 560,299.5 561.75,379.25" fill="#9dbf9b"/>
<polygon points="375,305.75 561.75,379.25 561.75,383.5 375.5,310" fill="#9dbf9b"/>
<polygon points="378,427.3 461,382.25 562.5,421 563.9,444 420.8,444" fill="#9dbf9b"/>
<polygon points="378,427.3 420.8,444 378.4,444" fill="#9dbf9b"/>
<polygon points="569.2,273.9 652,227.5 657.9,444 573.9,444" fill="#7e9b7e"/>
<polygon points="559.25,270 569.2,273.9 573.9,444 563.9,444" fill="#9dbf9b"/>
<polygon points="559.25,270 642.5,224 652,227.5 569.2,273.9" fill="#9dbf9b"/>
</g>
<g clip-path="url(#faces)" fill="none" stroke-width="1">
<path d="M331,142 L599,248 M599,248 L604.6,434 M553,262 L557.6,434" stroke="#50649f" stroke-opacity="0.32"/>
<path d="M341.4,421.1 L452,360.5 L650,437 M341.4,421.1 L372,434" stroke="#50649f" stroke-opacity="0.1"/>
</g>
<g stroke="#2a2a2a" stroke-width="0.9" fill="none">
<path d="M564.5,178 L566.6,269.5"/>
<path d="M647.5,136.5 L649.7,225"/>
<path d="M565,183.7 L607.5,160.5"/>
<path d="M652,225 L756,168.5"/>
<path d="M751,171.5 L754.4,393.5 M755,421 L757.6,434"/>
<path d="M372.8,341.6 L335.7,362.8 M315.9,373.6 L291.4,387"/>
<path d="M369,343 L457.8,375.5"/>
<path d="M284.2,384.7 L374.8,421.6"/>
<path d="M358,434 L375.2,424.2"/>
</g>
<g fill="#1a1a1a">
<polygon points="565,183.7 573.5,176.5 575,179.5"/>
<polygon points="651.5,136.5 641,140 643,144"/>
<polygon points="751,172 748.5,181 753.5,181"/>
<polygon points="372.8,341.6 364,344 366,347.5"/>
<polygon points="291.4,387 300,381.5 301.5,385"/>
</g>
<g font-family="Liberation Sans" fill="#1e1e1e" font-size="14" stroke="#1e1e1e" stroke-width="0.2">
<text letter-spacing="0.6" transform="matrix(0.74,-0.378,-0.05,1.18,612.6,162.8)">12.000in</text>
<text letter-spacing="0.6" transform="matrix(0.74,-0.355,-0.05,1.18,734.8,421.8)">48.000in</text>
<text transform="matrix(0.88,0.375,-0.9,0.56,300.2,360.6)">12.000in</text>
</g>
</g>
</svg>

<div class="a" style="left:236.3px;top:125.2px;width:28.5px;height:27.5px;border:1px solid #8c8c8c;border-radius:4px;background:#fff"></div>
<div class="a" style="left:236px;top:162.3px;width:18.5px;height:18.5px;border:1px solid #a8a8a8;border-radius:3px;background:#fff"></div>
<svg class="a" style="left:0;top:0" width="840" height="434" viewBox="0 0 840 434">
<path d="M245.4,131.4 L256,141.4 L251.4,142 L254.6,147.2 L252.4,148.2 L249.4,143 L246,146.6 Z" fill="#c49a28" stroke="#5a3a06" stroke-width="0.9" stroke-linejoin="round"/>
<path d="M246.8,134 L252.6,140 L249.2,140.6 L247.2,143.4 Z" fill="#e4c050"/>
<path d="M240,165.8 L244.4,170 L242.4,170.2 L243.4,172.4 L242.6,172.8 L241.6,170.6 L240,172 Z" fill="#7a7a7a"/>
<path d="M244.4,171.6 L247.6,170.2 L250.8,171.6 L250.8,176.2 L247.6,177.6 L244.4,176.2 Z" fill="#e8b888" stroke="#b07a48" stroke-width="0.5"/>
<path d="M244.4,171.6 L247.6,173 L250.8,171.6 M247.6,173 V177.6" stroke="#b07a48" stroke-width="0.4" fill="none"/>
<!-- pins -->
<path d="M216.8,105.4 H219 V108.4 H216.8 Z M217.9,108.4 V110.8 M215.9,108.4 H219.9" stroke="#4a5060" stroke-width="0.7" fill="none"/>
<path d="M216.8,417 H219 V420 H216.8 Z M217.9,420 V422.4 M215.9,420 H219.9" stroke="#4a5060" stroke-width="0.7" fill="none"/>
<!-- properties row -->
<path d="M4,429 L6.5,431.5 L9,429 M4,434 L6.5,431.5 L9,434" stroke="#444" stroke-width="0.8" fill="none"/>
<rect x="211" y="426.5" width="12" height="8" fill="#f4f6f8"/>
<path d="M214.6,433 L217.1,430.2 L219.6,433" stroke="#444" stroke-width="1" fill="none"/>
</svg>
<div class="tr" style="left:16.8px;top:428.6px;font-weight:bold;color:#111">Arrows</div>


</body></html>
